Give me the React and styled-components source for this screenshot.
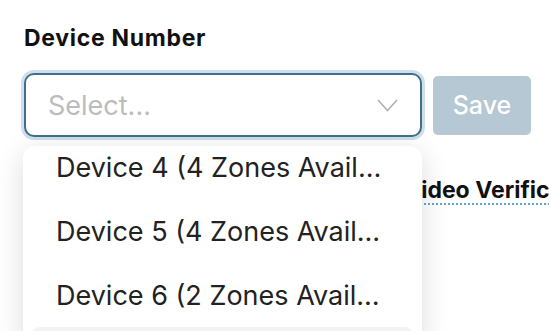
import React, { useEffect, useRef } from 'react'
import styled, { createGlobalStyle } from 'styled-components'

const GlobalStyle = createGlobalStyle`
  html, body {
    margin: 0;
    background: #ffffff;
    font-family: Inter, "Noto Sans", "Liberation Sans", sans-serif;
    color: #111;
  }
`

const Page = styled.div`
  padding: 24px 0 0 24px;
  width: 549px;
  height: 331px;
  box-sizing: border-box;
  overflow: hidden;
`

const Label = styled.div`
  font-size: 23px;
  font-weight: 700;
  line-height: 28px;
  margin-bottom: 21px;
  letter-spacing: 0.7px;
`

const FormRow = styled.div`
  display: flex;
  align-items: center;
  gap: 11px;
`

const SelectWrap = styled.div`
  position: relative;
  flex: none;
  width: 398px;
  z-index: 2;
`

const Control = styled.div`
  box-sizing: border-box;
  height: 64px;
  display: flex;
  align-items: center;
  justify-content: space-between;
  padding: 0 22px 0 22px;
  border: 2px solid #436e8b;
  border-radius: 10px;
  background: #fff;
  box-shadow: 0 0 0 3px #cddfea;
`

const Placeholder = styled.span`
  font-size: 27px;
  color: #bcbcbc;
`

const Chevron = () => (
  <svg width="21" height="13" viewBox="0 0 21 13" fill="none">
    <path d="M1 1l9.5 10.5L20 1" stroke="#b0b0b0" strokeWidth="1.6" />
  </svg>
)

const SaveButton = styled.button`
  flex: none;
  width: 98px;
  height: 59px;
  border: none;
  border-radius: 5px;
  background: #b5c8d3;
  color: #fff;
  font-family: inherit;
  font-size: 25px;
  font-weight: 500;
`

const Menu = styled.div`
  position: absolute;
  top: calc(100% + 9px);
  left: -1px;
  right: 0;
  height: 200px;
  background: #fff;
  border-radius: 12px;
  box-shadow: 0 6px 28px rgba(0, 0, 0, 0.14);
  overflow: hidden;
`

const List = styled.div`
  height: 100%;
  overflow: hidden;
  padding: 0 9px;
`

const Option = styled.div`
  box-sizing: border-box;
  height: 64px;
  display: flex;
  align-items: center;
  padding: 0 22px 0 24px;
  border-radius: 8px;
  font-size: 27px;
  color: #222;
  background: ${(p) => (p.$active ? '#f3f3f3' : 'transparent')};

  span {
    white-space: nowrap;
    overflow: hidden;
    text-overflow: ellipsis;
  }
`

const Below = styled.div`
  display: flex;
  padding-left: 380px;
  margin-top: 41px;
`

const Hint = styled.span`
  font-size: 23px;
  font-weight: 700;
  white-space: nowrap;
  border-bottom: 2px dotted #5aa7d4;
  line-height: 25px;
`

const devices = [
  'Device 1 (4 Zones Available)',
  'Device 2 (4 Zones Available)',
  'Device 3 (4 Zones Available)',
  'Device 4 (4 Zones Available)',
  'Device 5 (4 Zones Available)',
  'Device 6 (2 Zones Available)',
  'Device 7 (4 Zones Available)',
]

const App = () => {
  const listRef = useRef(null)

  useEffect(() => {
    if (listRef.current) listRef.current.scrollTop = 64 * 3 + 11
  }, [])

  return (
    <>
      <GlobalStyle />
      <Page>
        <Label>Device Number</Label>
        <FormRow>
          <SelectWrap>
            <Control>
              <Placeholder>Select...</Placeholder>
              <Chevron />
            </Control>
            <Menu>
              <List ref={listRef}>
                {devices.map((d, i) => (
                  <Option key={d} $active={i === 6}>
                    <span>{d}</span>
                  </Option>
                ))}
              </List>
            </Menu>
          </SelectWrap>
          <SaveButton>Save</SaveButton>
        </FormRow>
        <Below>
          <Hint>Video Verification</Hint>
        </Below>
      </Page>
    </>
  )
}

export default App
